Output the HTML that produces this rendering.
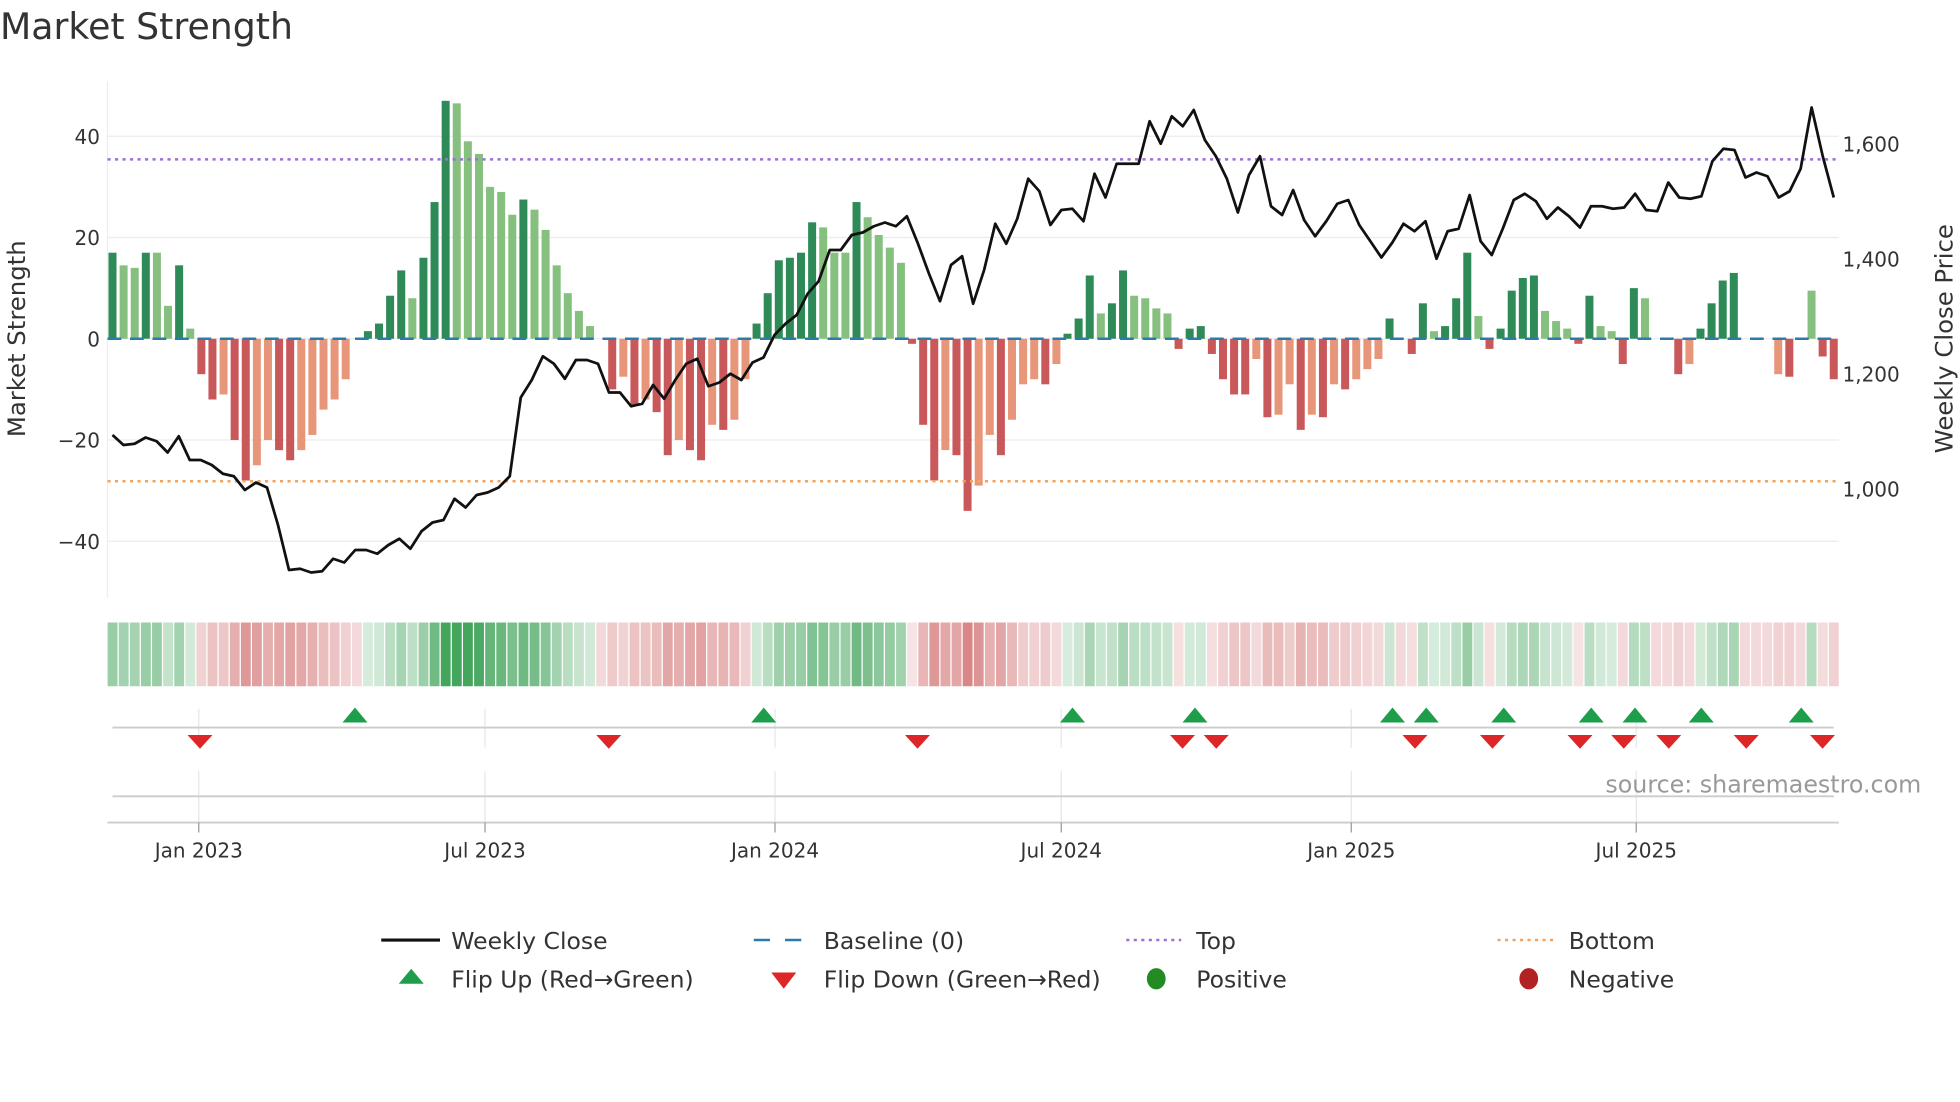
<!DOCTYPE html>
<html><head><meta charset="utf-8"><style>
html,body{margin:0;padding:0;background:#fff;}
svg{display:block;font-family:"DejaVu Sans","Liberation Sans",sans-serif;}
</style></head><body>
<svg id="s" width="1960" height="1102" viewBox="0 0 1568 881.6" xmlns="http://www.w3.org/2000/svg"></svg>
<script>
var V=[17,14.5,14,17,17,6.5,14.5,2,-7,-12,-11,-20,-28,-25,-20,-22,-24,-22,-19,-14,-12,-8,0,1.5,3,8.5,13.5,8,16,27,47,46.5,39,36.5,30,29,24.5,27.5,25.5,21.5,14.5,9,5.5,2.5,0,-10,-7.5,-13,-12,-14.5,-23,-20,-22,-24,-17,-18,-16,-8,3,9,15.5,16,17,23,22,17,17,27,24,20.5,18,15,-1,-17,-28,-22,-23,-34,-29,-19,-23,-16,-9,-8,-9,-5,1,4,12.5,5,7,13.5,8.5,8,6,5,-2,2,2.5,-3,-8,-11,-11,-4,-15.5,-15,-9,-18,-15,-15.5,-9,-10,-8,-6,-4,4,0,-3,7,1.5,2.5,8,17,4.5,-2,2,9.5,12,12.5,5.5,3.5,2,-1,8.5,2.5,1.5,-5,10,8,0,0,-7,-5,2,7,11.5,13,0,0,0,-7,-7.5,0,9.5,-3.5,-8];
var D=[1,0,0,1,0,0,1,0,1,1,0,1,1,0,0,1,1,0,0,0,0,0,0,1,1,1,1,0,1,1,1,0,0,0,0,0,0,1,0,0,0,0,0,0,0,1,0,1,0,1,1,0,1,1,0,1,0,0,1,1,1,1,1,1,0,0,0,1,0,0,0,0,1,1,1,0,1,1,0,0,1,0,0,0,1,0,1,1,1,0,1,1,0,0,0,0,1,1,1,1,1,1,1,0,1,0,0,1,0,1,0,1,0,0,0,1,0,1,1,0,1,1,1,0,1,1,1,1,1,0,0,0,1,1,0,0,1,1,0,0,0,1,0,1,1,1,1,1,0,0,0,1,1,0,1,1,1];
var P=[348,356,355,350,353,362,349,368,368,372,379,381,392,386,390,420,456,455,458,457,447,450,440,440,443,436,431,439,425,418,416,399,406,396,394,390,381,318,304,285,291,303,288,288,291,314,314,325,323,308,319,304,291,287,309,306,299,304,290,286,268,259,252,235,225,200,200,188,186,181,178,181,173,195,219,241,212,205,243,216,179,195,175,143,153,180,168,167,177,139,158,131,131,131,97,115,93,101,88,112,125,143,170,140,125,165,172,152,176,189,177,163,160,180,193,206,194,179,185,177,207,185,183,156,193,204,183,160,155,161,175,166,173,182,165,165,167,166,155,168,169,146,158,159,157,129,119,120,142,138,141,158,153,135,86,125,158];
var N=V.length,sx=(1467-90)/(N-1),spx=(1467-90)/(P.length-1);
function X(i){return 90+i*sx;}
function Y(v){return 271-v*4.05;}
var h='';
h+='<text x="0" y="31" font-size="29" fill="#333">Market Strength</text>';
[40,20,0,-20,-40].forEach(function(v){h+='<line x1="86" x2="1471" y1="'+Y(v)+'" y2="'+Y(v)+'" stroke="#ececf0" stroke-width="1"/>';
h+='<text x="80" y="'+(Y(v)+6)+'" font-size="16" text-anchor="end" fill="#333">'+(v<0?'\u2212'+(-v):v)+'</text>';});
h+='<line x1="86" x2="86" y1="65" y2="478" stroke="#eee"/>';
[[1600,115],[1400,207],[1200,299],[1000,391]].forEach(function(a){h+='<text x="1474" y="'+(a[1]+6)+'" font-size="16" fill="#333">'+String(a[0]).replace(/(\d)(\d{3})$/,'$1,$2')+'</text>';});
h+='<text transform="translate(20,271) rotate(-90)" font-size="19.5" text-anchor="middle" fill="#333">Market Strength</text>';
h+='<text transform="translate(1562,271) rotate(-90)" font-size="19.5" text-anchor="middle" fill="#333">Weekly Close Price</text>';
for(var i=0;i<N;i++){var v=V[i];if(v==0)continue;var c=v>0?(D[i]?'#2e8b57':'#86c07f'):(D[i]?'#c9585a':'#e8967a');
var y0=Y(0),y1=Y(v);h+='<rect x="'+(X(i)-3.2)+'" y="'+Math.min(y0,y1)+'" width="6.4" height="'+Math.abs(y1-y0)+'" fill="'+c+'"/>';}
h+='<line x1="86" x2="1471" y1="127.5" y2="127.5" stroke="#9b6fdc" stroke-width="2" stroke-dasharray="2.5,3.5"/>';
h+='<line x1="86" x2="1471" y1="385" y2="385" stroke="#f2a560" stroke-width="2" stroke-dasharray="2.5,3.5"/>';
h+='<line x1="86" x2="1471" y1="271" y2="271" stroke="#2c7bab" stroke-width="2" stroke-dasharray="11,7"/>';
var pts=[];for(var i=0;i<P.length;i++)pts.push((90+i*spx).toFixed(1)+','+P[i]);
h+='<polyline points="'+pts.join(' ')+'" fill="none" stroke="#111" stroke-width="2.2" stroke-linejoin="round"/>';
for(var i=0;i<N;i++){var v=V[i],a=Math.min(0.95,0.18+Math.abs(v)/50);var c=v>=0?'rgba(58,160,84,'+a.toFixed(2)+')':'rgba(200,80,80,'+(a*0.8).toFixed(2)+')';
if(v==0)c='rgba(200,80,80,0.22)';
h+='<rect x="'+(X(i)-4.4+0.5)+'" y="498" width="'+(sx-1)+'" height="51" fill="'+c+'"/>';}
var tx=[159,388,620,849,1081,1309];
tx.forEach(function(x){h+='<line x1="'+x+'" x2="'+x+'" y1="567" y2="598" stroke="#e6e6ea"/><line x1="'+x+'" x2="'+x+'" y1="617" y2="658" stroke="#e6e6ea"/>';});
h+='<line x1="90" x2="1467" y1="582" y2="582" stroke="#ccc" stroke-width="1.5"/>';
h+='<line x1="90" x2="1467" y1="637" y2="637" stroke="#ccc" stroke-width="1.5"/>';
h+='<line x1="86" x2="1471" y1="658" y2="658" stroke="#ccc" stroke-width="1.5"/>';
[284,611,858,956,1114,1141,1203,1273,1308,1361,1441].forEach(function(x){h+='<path d="M'+(x-10)+',578 L'+(x+10)+',578 L'+x+',566 Z" fill="#1e9e4a"/>';});
[160,487,734,946,973,1132,1194,1264,1299,1335,1397,1458].forEach(function(x){h+='<path d="M'+(x-10)+',588 L'+(x+10)+',588 L'+x+',599 Z" fill="#dd2628"/>';});
tx.forEach(function(x,k){h+='<line x1="'+x+'" x2="'+x+'" y1="658" y2="666" stroke="#999"/><text x="'+x+'" y="686" font-size="16" text-anchor="middle" fill="#333">'+['Jan 2023','Jul 2023','Jan 2024','Jul 2024','Jan 2025','Jul 2025'][k]+'</text>';});
h+='<text x="1537" y="634" font-size="19" text-anchor="end" fill="#999">source: sharemaestro.com</text>';
var ly1=752,ly2=783;
h+='<line x1="305" x2="352" y1="'+ly1+'" y2="'+ly1+'" stroke="#111" stroke-width="2.5"/>';
h+='<line x1="603" x2="646" y1="'+ly1+'" y2="'+ly1+'" stroke="#2c7bab" stroke-width="2" stroke-dasharray="13,12"/>';
h+='<line x1="901" x2="945" y1="'+ly1+'" y2="'+ly1+'" stroke="#9b6fdc" stroke-width="2" stroke-dasharray="2.5,3.5"/>';
h+='<line x1="1198" x2="1244" y1="'+ly1+'" y2="'+ly1+'" stroke="#f2a560" stroke-width="2" stroke-dasharray="2.5,3.5"/>';
h+='<path d="M319,787 L339,787 L329,775 Z" fill="#1e9e4a"/>';
h+='<path d="M617,778 L637,778 L627,791 Z" fill="#dd2628"/>';
h+='<ellipse cx="925" cy="783" rx="7.5" ry="8.5" fill="#228b22"/>';
h+='<ellipse cx="1223" cy="783" rx="7.5" ry="8.5" fill="#b22222"/>';
[['Weekly Close',361,ly1],['Baseline (0)',659,ly1],['Top',957,ly1],['Bottom',1255,ly1],['Flip Up (Red\u2192Green)',361,ly2],['Flip Down (Green\u2192Red)',659,ly2],['Positive',957,ly2],['Negative',1255,ly2]].forEach(function(t){h+='<text x="'+t[1]+'" y="'+(t[2]+7)+'" font-size="18.8" fill="#333">'+t[0]+'</text>';});
document.getElementById('s').innerHTML=h;
</script>
</body></html>
